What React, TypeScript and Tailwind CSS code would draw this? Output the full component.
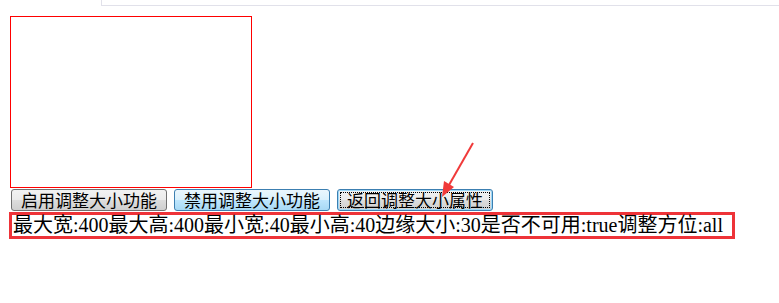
import React from 'react';

const btnBase =
  'h-[22px] w-[156px] rounded-[3px] border text-[17px] leading-[20px] text-black font-["Noto_Sans_CJK_SC",sans-serif] flex items-center justify-center';

export default function App() {
  return (
    <div className="relative w-[779px] h-[303px] bg-white overflow-hidden">
      {/* cut-off panel at the top */}
      <div className="ml-[101px] h-[6px] border-l border-b border-[#e1e1ea]" />

      {/* resizable box */}
      <div className="mt-[10px] ml-[10px] w-[242px] h-[172px] border border-[#ff0000]" />

      <div className="mt-[1px] pl-[11px] flex gap-[7px]">
        <button className={`${btnBase} border-[#707070] bg-[linear-gradient(#f2f2f2_0%,#ebebeb_50%,#dddddd_50%,#cfcfcf_100%)]`}>
          启用调整大小功能
        </button>
        <button className={`${btnBase} border-[#3c7fb1] bg-[linear-gradient(#eaf6fd_0%,#d9f0fc_50%,#bee6fd_50%,#a7d9f5_100%)]`}>
          禁用调整大小功能
        </button>
        <button className={`${btnBase} relative border-[#3c7fb1] bg-[linear-gradient(#f2f2f2_0%,#ebebeb_50%,#dddddd_50%,#cfcfcf_100%)] shadow-[inset_0_0_0_1px_#9ed8f8]`}>
          <span className="absolute inset-[2px] border border-dotted border-black" />
          返回调整大小属性
        </button>
      </div>

      <div className="mt-[1px] ml-[9px] w-[726px] border-[3px] border-[#ee3338] pl-[1px] text-[20px] leading-[21px] text-black whitespace-nowrap font-['Liberation_Serif','Noto_Sans_CJK_SC',serif]">
        最大宽:400最大高:400最小宽:40最小高:40边缘大小:30是否不可用:true调整方位:all
      </div>

      {/* annotation arrow */}
      <svg className="absolute left-0 top-0" width="779" height="303">
        <line x1="473" y1="143" x2="449" y2="185" stroke="#f03a3a" strokeWidth="2" />
        <polygon points="442,197 444,181 454,187" fill="#f03a3a" />
      </svg>
    </div>
  );
}
